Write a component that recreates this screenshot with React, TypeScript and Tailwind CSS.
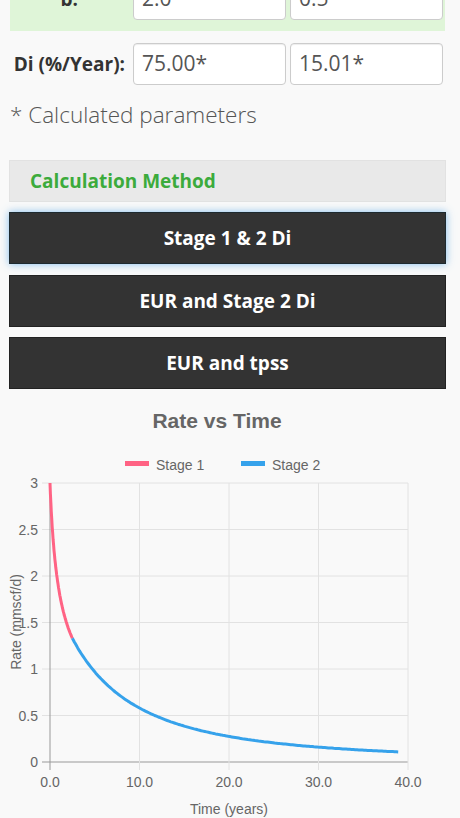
import React from 'react';

const X0 = 50;
const X1 = 408;
const YT = 83;
const YB = 362;
const sx = (t: number) => X0 + (t / 40) * (X1 - X0);
const sy = (q: number) => YB - (q / 3) * (YB - YT);

function stage1(t: number) {
  return 3 / Math.sqrt(1 + 1.636 * t);
}
function stage2(t: number) {
  const q1 = stage1(2.5);
  return q1 / Math.pow(1 + 0.0685 * (t - 2.5), 2);
}

function pts(from: number, to: number, step: number, f: (t: number) => number) {
  const out: string[] = [];
  for (let t = from; t <= to + 1e-9; t += step) {
    out.push(`${sx(t).toFixed(1)},${sy(f(t)).toFixed(1)}`);
  }
  return out.join(' ');
}

function RateChart() {
  const yTicks = [3, 2.5, 2, 1.5, 1, 0.5, 0];
  const xTicks = [0, 10, 20, 30, 40];
  return (
    <svg width="460" height="418" viewBox="0 0 460 418" className="block" style={{ fontFamily: '"Liberation Sans", Arial, sans-serif' }}>
      <text x="217" y="28" textAnchor="middle" fontSize="21" fontWeight="bold" fill="#666">Rate vs Time</text>

      <rect x="125" y="61" width="24" height="5" fill="#ff6384" />
      <text x="156" y="70" fontSize="14" fill="#666">Stage 1</text>
      <rect x="241" y="61" width="24" height="5" fill="#36a2eb" />
      <text x="272" y="70" fontSize="14" fill="#666">Stage 2</text>

      {yTicks.map(v => (
        <g key={v}>
          <line x1={42} x2={X1} y1={sy(v)} y2={sy(v)} stroke={v === 0 ? '#999' : '#e2e2e2'} strokeWidth="1" />
          <text x="38" y={sy(v) + 5} textAnchor="end" fontSize="14" fill="#666">{v}</text>
        </g>
      ))}
      {xTicks.map(v => (
        <g key={v}>
          <line x1={sx(v)} x2={sx(v)} y1={YT} y2={YB + 8} stroke={v === 0 ? '#999' : '#e2e2e2'} strokeWidth="1" />
          <text x={sx(v)} y="387" textAnchor="middle" fontSize="14" fill="#666">{v.toFixed(1)}</text>
        </g>
      ))}

      <polyline points={pts(0, 2.5, 0.05, stage1)} fill="none" stroke="#ff6384" strokeWidth="3" strokeLinejoin="round" />
      <polyline points={pts(2.5, 38.9, 0.2, stage2)} fill="none" stroke="#36a2eb" strokeWidth="3" strokeLinejoin="round" />

      <text x="229" y="414" textAnchor="middle" fontSize="14" fill="#666">Time (years)</text>
      <text transform="translate(21 222) rotate(-90)" textAnchor="middle" fontSize="14" fill="#666">Rate (mmscf/d)</text>
    </svg>
  );
}

function Field({ value }: { value: string }) {
  return (
    <div className="flex-1 h-[42px] flex items-center px-[8px] bg-white border border-[#ccc] rounded-[4px] shadow-[inset_0_1px_1px_rgba(0,0,0,0.075)] text-[21px] text-[#555]">
      {value}
    </div>
  );
}

export default function App() {
  return (
    <div className="w-[460px] h-[818px] overflow-hidden bg-[#f9f9f9]" style={{ fontFamily: '"Open Sans", "Noto Sans", sans-serif' }}>
      <div className="pl-[10px] pr-[15px]">
        <div className="mt-[-33px] flex items-center gap-[4px] pr-[2px] py-[11px] bg-[#dff5d8]">
          <div className="w-[119px] shrink-0 pr-[51px] text-right text-[19px] font-bold text-[#333]">b:</div>
          <Field value="2.0*" />
          <Field value="0.5" />
        </div>
        <div className="mt-[12px] flex items-center gap-[4px] pr-[2px]">
          <div className="w-[119px] shrink-0 pr-[4px] text-right text-[19px] font-bold text-[#333] whitespace-nowrap">Di (%/Year):</div>
          <Field value="75.00*" />
          <Field value="15.01*" />
        </div>
        <p className="mt-[14px] text-[22.5px] font-light text-[#555] leading-[32px]">* Calculated parameters</p>
      </div>

      <div className="px-[9px] mt-[29px] mr-[5px] flex flex-col">
        <div className="h-[42px] flex items-center pl-[20px] bg-[#e9e9e9] border border-[#e2e2e2] text-[19px] font-bold text-[#3cab3c]">
          Calculation Method
        </div>
        <button className="mt-[10px] h-[52px] bg-[#333] border border-[#1d2a30] text-white text-[19px] font-bold shadow-[0_0_8px_rgba(102,175,233,0.8)]">
          Stage 1 &amp; 2 Di
        </button>
        <button className="mt-[11px] h-[52px] bg-[#333] border border-[#222] text-white text-[19px] font-bold">
          EUR and Stage 2 Di
        </button>
        <button className="mt-[10px] h-[52px] bg-[#333] border border-[#222] text-white text-[19px] font-bold">
          EUR and tpss
        </button>
      </div>

      <div className="mt-[11px]">
        <RateChart />
      </div>
    </div>
  );
}
